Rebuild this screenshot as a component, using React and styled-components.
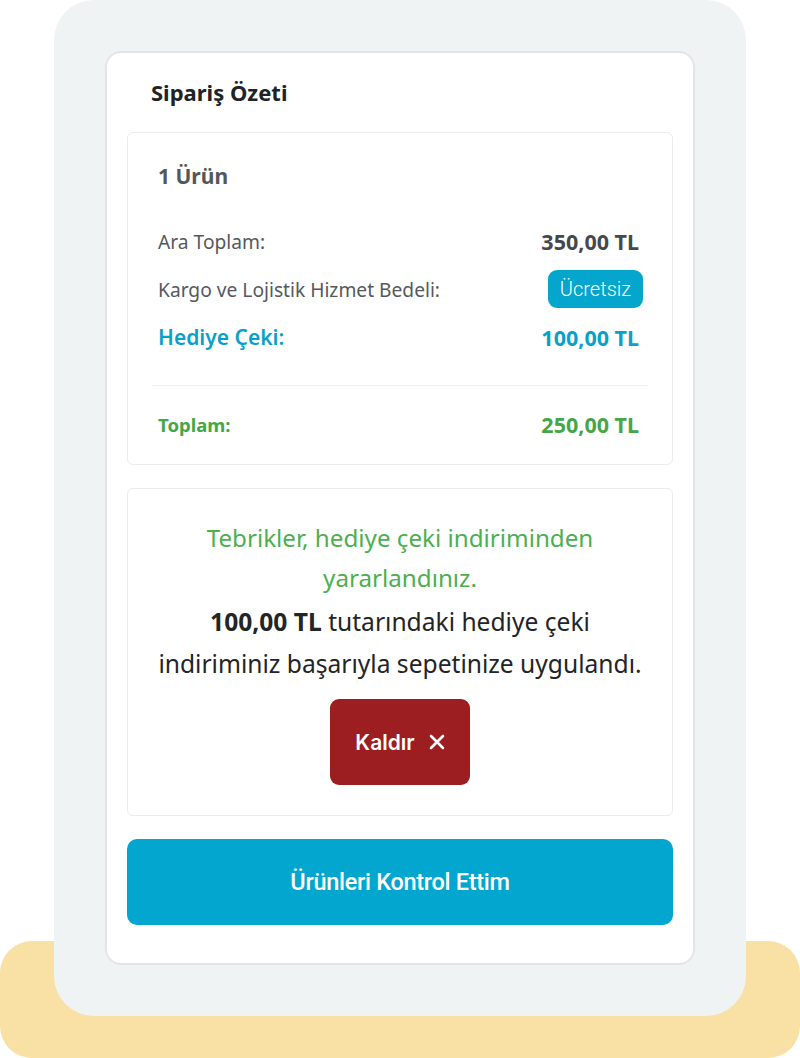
import React from 'react';
import styled, { createGlobalStyle } from 'styled-components';

const GlobalStyle = createGlobalStyle`
	html, body {
		margin: 0;
		padding: 0;
		background: #fff;
	}
	body {
		font-family: 'Noto Sans', 'Open Sans', Arial, sans-serif;
		-webkit-font-smoothing: antialiased;
	}
`;

const Stage = styled.div`
	display: grid;
	width: 800px;
	height: 1058px;
	overflow: hidden;
`;

const Band = styled.div`
	grid-area: 1 / 1;
	align-self: end;
	height: 117px;
	background-color: #f9e1a6;
	border-radius: 32px;
	z-index: 0;
`;

const Panel = styled.div`
	grid-area: 1 / 1;
	align-self: start;
	justify-self: center;
	width: 692px;
	height: 1016px;
	box-sizing: border-box;
	padding: 51px;
	background-color: #eff3f4;
	border-radius: 40px;
	z-index: 1;
`;

const Card = styled.div`
	display: flex;
	flex-direction: column;
	height: 100%;
	box-sizing: border-box;
	padding: 20px 20px 38px;
	background-color: #fff;
	border: 2px solid #e1e5e8;
	border-radius: 16px;
`;

const Title = styled.h2`
	margin: 0 0 21px 24px;
	font-size: 22px;
	line-height: 38px;
	font-weight: 700;
	color: #202326;
`;

const Box = styled.div`
	display: flex;
	flex-direction: column;
	border: 1px solid #ececec;
	border-radius: 6px;
	padding: ${props => props.pad};
	margin-top: ${props => props.top || 0}px;
`;

const Count = styled.div`
	padding-left: 30px;
	font-size: 21px;
	line-height: 30px;
	font-weight: 700;
	color: #53575b;
	margin-bottom: 26px;
`;

const Row = styled.div`
	display: flex;
	align-items: center;
	justify-content: space-between;
	height: 48px;
	padding: 0 29px 0 30px;
	color: ${props => props.color || '#55595d'};
	margin-top: ${props => props.top || 0}px;
`;

const Label = styled.span`
	font-size: ${props => props.size || 19.2}px;
	font-weight: ${props => props.weight || 400};
`;

const Value = styled.span`
	margin-right: 4px;
	font-size: 21.5px;
	font-weight: 700;
	color: ${props => props.color || '#45494c'};
`;

const Badge = styled.span`
	display: inline-flex;
	align-items: center;
	height: 38px;
	padding: 0 12px;
	border-radius: 9px;
	background-color: #04a6cd;
	color: #fff;
	font-family: Roboto, 'Noto Sans', sans-serif;
	font-weight: 300;
	font-size: 20px;
`;

const Divider = styled.hr`
	margin: 24px 24px 0;
	border: 0;
	border-top: 1px solid #eeeeee;
`;

const Message = styled.p`
	margin: 0 0 ${props => props.bottom || 0}px;
	text-align: center;
	font-size: ${props => props.size}px;
	line-height: ${props => props.lh}px;
	color: ${props => props.color};
	strong {
		font-weight: 700;
	}
`;

const RemoveButton = styled.button`
	align-self: center;
	display: inline-flex;
	align-items: center;
	justify-content: center;
	gap: 14px;
	width: 140px;
	height: 86px;
	margin-top: 14px;
	border: 0;
	border-radius: 9px;
	background-color: #9c1e21;
	color: #fff;
	font-family: Inter, 'Noto Sans', sans-serif;
	font-size: 21px;
	font-weight: 600;
`;

const PrimaryButton = styled.button`
	height: 87px;
	margin-top: 23px;
	border: 0;
	border-radius: 10px;
	background-color: #03a6ce;
	color: #fff;
	font-family: Roboto, 'Noto Sans', sans-serif;
	font-size: 23.5px;
	font-weight: 500;
	letter-spacing: -0.3px;
`;

const CloseIcon = () => (
	<svg width="16" height="16" viewBox="0 0 16 16" fill="none">
		<path d="M2 2 L14 14 M14 2 L2 14" stroke="#fff" strokeWidth="2.6" strokeLinecap="round" />
	</svg>
);

const App = () => {
	return (
		<>
			<GlobalStyle />
			<Stage>
				<Band />
				<Panel>
					<Card>
						<Title>Sipariş Özeti</Title>
						<Box pad="28px 0 16px">
							<Count>1 Ürün</Count>
							<Row>
								<Label>Ara Toplam:</Label>
								<Value>350,00 TL</Value>
							</Row>
							<Row>
								<Label>Kargo ve Lojistik Hizmet Bedeli:</Label>
								<Badge>Ücretsiz</Badge>
							</Row>
							<Row color="#0aa1c9">
								<Label size={21} weight={600}>Hediye Çeki:</Label>
								<Value color="#0aa1c9">100,00 TL</Value>
							</Row>
							<Divider />
							<Row color="#45a649" top={14}>
								<Label size={18.5} weight={700}>Toplam:</Label>
								<Value color="#45a649">250,00 TL</Value>
							</Row>
						</Box>
						<Box pad="29px 20px 30px" top={23}>
							<Message color="#4caf50" size={24.2} lh={39.5} bottom={4}>
								Tebrikler, hediye çeki indiriminden
								<br />
								yararlandınız.
							</Message>
							<Message color="#222426" size={24.6} lh={42}>
								<strong>100,00 TL</strong> tutarındaki hediye çeki
								<br />
								indiriminiz başarıyla sepetinize uygulandı.
							</Message>
							<RemoveButton>
								Kaldır
								<CloseIcon />
							</RemoveButton>
						</Box>
						<PrimaryButton>Ürünleri Kontrol Ettim</PrimaryButton>
					</Card>
				</Panel>
			</Stage>
		</>
	);
};

export default App;
